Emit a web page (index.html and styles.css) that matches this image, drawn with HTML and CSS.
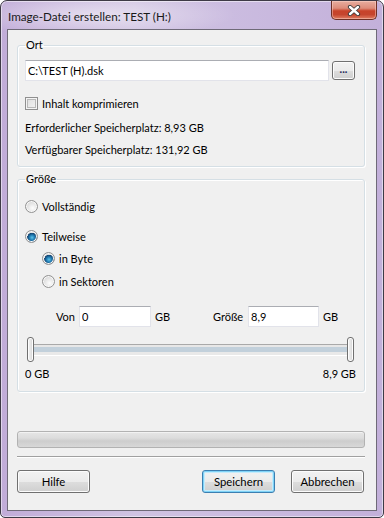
FILE: index.html
```html
<!DOCTYPE html>
<html lang="de">

<head>
    <meta charset="UTF-8">
    <meta name="viewport" content="width=device-width, initial-scale=1.0">
    <title>Image-Datei erstellen</title>
    <link rel="stylesheet" href="styles.css">
</head>

<body>
    <div class="window">
        <div class="titlebar">
            <span class="title">Image-Datei erstellen: TEST (H:)</span>
            <button class="close" aria-label="Schließen">
                <svg width="14" height="11" viewBox="0 0 14 11">
                    <path d="M3 2 L11 9 M11 2 L3 9" stroke="#3b3b3b" stroke-width="4.2" stroke-linecap="round" />
                    <path d="M3 2 L11 9 M11 2 L3 9" stroke="#fff" stroke-width="2.4" stroke-linecap="round" />
                </svg>
            </button>
        </div>

        <div class="client">
            <fieldset class="group group-ort">
                <legend>Ort</legend>
                <div class="path-row">
                    <input class="textbox path" type="text" value="C:\TEST (H).dsk">
                    <button class="btn-browse">...</button>
                </div>
                <label class="check-row">
                    <span class="checkbox"></span>
                    Inhalt komprimieren
                </label>
                <div class="info-row first">Erforderlicher Speicherplatz: 8,93 GB</div>
                <div class="info-row">Verfügbarer Speicherplatz: 131,92 GB</div>
            </fieldset>

            <fieldset class="group group-size">
                <legend>Größe</legend>
                <label class="radio-row full"><span class="radio"></span>Vollständig</label>
                <label class="radio-row part"><span class="radio checked"></span>Teilweise</label>
                <label class="radio-row sub byte"><span class="radio checked"></span>in Byte</label>
                <label class="radio-row sub sect"><span class="radio"></span>in Sektoren</label>

                <div class="range-row">
                    <span>Von</span>
                    <input class="textbox" type="text" value="0">
                    <span class="unit">GB</span>
                    <span>Größe</span>
                    <input class="textbox" type="text" value="8,9">
                    <span class="unit">GB</span>
                </div>

                <div class="slider">
                    <span class="thumb"></span>
                    <span class="track"></span>
                    <span class="thumb"></span>
                </div>
                <div class="slider-labels">
                    <span>0 GB</span>
                    <span>8,9 GB</span>
                </div>
            </fieldset>

            <div class="progress"></div>
            <div class="separator"></div>

            <div class="buttons">
                <button class="btn">Hilfe</button>
                <button class="btn default push">Speichern</button>
                <button class="btn">Abbrechen</button>
            </div>
        </div>
    </div>
</body>

</html>
```

FILE: styles.css
```css
body {
    margin: 0;
    padding: 0;
    font-family: Lato, "Open Sans", sans-serif;
    font-size: 11px;
    color: #000;
    background: #fff;
}

.window {
    width: 384px;
    height: 518px;
    box-sizing: border-box;
    display: flex;
    flex-direction: column;
    padding: 0 6px 6px 6px;
    border: 1px solid #3e3a46;
    border-radius: 7px 7px 5px 5px;
    background:
        radial-gradient(ellipse 140px 22px at 95px 14px, rgba(255, 255, 255, 0.5), rgba(255, 255, 255, 0)),
        linear-gradient(to right, #c1acd8, #d0c3e2 35%, #cbbce0 60%, #c3b0da);
    box-shadow: inset 0 0 0 1px rgba(255, 255, 255, 0.5);
}

/* title bar */

.titlebar {
    height: 28px;
    display: flex;
    justify-content: space-between;
    align-items: flex-start;
    margin: 0 -6px;
}

.title {
    padding: 7px 0 0 7px;
    line-height: 16px;
    font-size: 11.7px;
    color: #1a1a1a;
}

.close {
    width: 46px;
    height: 19px;
    margin: 0 6px 0 0;
    padding: 0;
    display: flex;
    align-items: center;
    justify-content: center;
    border: 1px solid #6d3026;
    border-top: none;
    border-radius: 0 0 5px 5px;
    background: linear-gradient(#e8ad9f 0%, #dd8c7a 40%, #c8432a 55%, #c5452e 75%, #e07d62 100%);
    box-shadow: inset 0 0 0 1px rgba(255, 220, 210, 0.45);
}

/* client area */

.client {
    flex: 1;
    display: flex;
    flex-direction: column;
    border: 1px solid #6f6a78;
    background: #f0f0f0;
}

.group {
    margin: 0 11px 0 9px;
    padding: 0 8px 0 7px;
    border: 1px solid #d5dfe5;
    border-radius: 3px;
    box-shadow: inset 1px 1px 0 #fff, 1px 1px 0 #fff;
}

.group legend {
    padding: 0 1px;
    line-height: 16px;
}

.group-ort {
    margin-top: 7px;
    padding-top: 7px;
    padding-bottom: 9px;
}

.group-size {
    margin-top: 4px;
    padding-top: 11px;
    padding-bottom: 9px;
}

.textbox {
    box-sizing: border-box;
    height: 21px;
    margin: 0;
    padding: 0 2px;
    font: inherit;
    color: #000;
    background: #fff;
    border: 1px solid #e2e3ea;
    border-top-color: #abadb3;
    outline: none;
}

.path-row {
    display: flex;
    align-items: center;
    gap: 3px;
}

.path {
    width: 304px;
}

.btn-browse {
    width: 23px;
    height: 19px;
    padding: 0 0 4px 0;
    font: inherit;
    font-weight: bold;
    line-height: 10px;
    color: #1e2a5a;
    border: 1px solid #707070;
    border-radius: 3px;
    background: linear-gradient(#f2f2f2 0%, #ebebeb 50%, #dddddd 51%, #cfcfcf 100%);
    box-shadow: inset 0 0 0 1px #fcfcfc;
}

.check-row,
.radio-row,
.info-row {
    display: flex;
    align-items: center;
    height: 16px;
}

.check-row {
    margin-top: 14px;
    gap: 4px;
}

.info-row {
    margin-top: 6px;
}

.info-row.first {
    margin-top: 8px;
}

.checkbox {
    box-sizing: border-box;
    width: 13px;
    height: 13px;
    border: 1px solid #8f8f8f;
    background: linear-gradient(135deg, #dcdcdc, #f6f6f6);
    box-shadow: inset 0 0 0 1px #f4f4f4, inset 0 0 0 2px #b8b8b8;
}

.radio-row {
    gap: 4px;
}

.radio-row.part {
    margin-top: 14px;
}

.radio-row.sub {
    margin-left: 17px;
}

.radio-row.byte {
    margin-top: 6px;
}

.radio-row.sect {
    margin-top: 7px;
}

.radio {
    box-sizing: border-box;
    width: 13px;
    height: 13px;
    border: 1px solid #929292;
    border-radius: 50%;
    background: radial-gradient(circle at 60% 65%, #fdfdfd 0%, #e6e6e6 45%, #c9c9c9 100%);
    box-shadow: inset 0 0 0 1px #f8f8f8;
}

.radio.checked {
    background:
        radial-gradient(circle at 55% 60%, #5cc4ec 0%, #1f78ae 30%, #123f6c 52%, rgba(18, 63, 108, 0) 56%),
        radial-gradient(circle at 60% 65%, #fdfdfd 0%, #e6e6e6 45%, #c9c9c9 100%);
}

.range-row {
    display: grid;
    grid-template-columns: 23px 72px 62px 35px 71px auto;
    align-items: center;
    margin: 17px 0 0 31px;
}

.range-row .unit {
    padding-left: 4px;
}

.slider {
    display: flex;
    align-items: center;
    width: 327px;
    height: 25px;
    margin: 10px 0 0 2px;
}

.thumb {
    box-sizing: border-box;
    width: 7px;
    height: 25px;
    border: 1px solid #707070;
    border-radius: 3px;
    background: linear-gradient(to right, #f4f4f4, #e2e2e2 60%, #d2d2d2);
    box-shadow: inset 0 0 0 1px #fdfdfd;
}

.track {
    flex: 1;
    height: 12px;
    background: linear-gradient(#a9a9a9 0, #a9a9a9 1px, #e7e7e7 1px, #e7e7e7 3px, #c2d0db 3px, #c2d0db 8px, #e9e9e9 8px, #e9e9e9 11px, #fff 11px);
}

.slider-labels {
    display: flex;
    justify-content: space-between;
    height: 16px;
    line-height: 16px;
    margin-top: 4px;
}

.progress {
    height: 17px;
    box-sizing: border-box;
    margin: 39px 11px 0 9px;
    border: 1px solid #b2b2b2;
    border-radius: 3px;
    background: linear-gradient(#e6e6e6 0%, #dcdcdc 40%, #cdcdcd 60%, #d8d8d8 100%);
    box-shadow: inset 0 1px 0 #f2f2f2;
}

.separator {
    height: 1px;
    margin: 8px 11px 0 9px;
    background: #a0a0a0;
    box-shadow: 0 1px 0 #fff;
}

.buttons {
    display: flex;
    gap: 16px;
    margin: 13px 12px 0 9px;
}

.btn {
    width: 73px;
    height: 23px;
    padding: 0;
    font: inherit;
    font-size: 11.3px;
    color: #000;
    border: 1px solid #707070;
    border-radius: 3px;
    background: linear-gradient(#f2f2f2 0%, #ebebeb 50%, #dddddd 51%, #cfcfcf 100%);
    box-shadow: inset 0 0 0 1px #fcfcfc;
}

.btn.default {
    border-color: #3c7fb1;
    box-shadow: inset 0 0 0 1px #7fd3f7, inset 0 0 0 2px #c6ebfb;
}

.push {
    margin-left: auto;
}
```
